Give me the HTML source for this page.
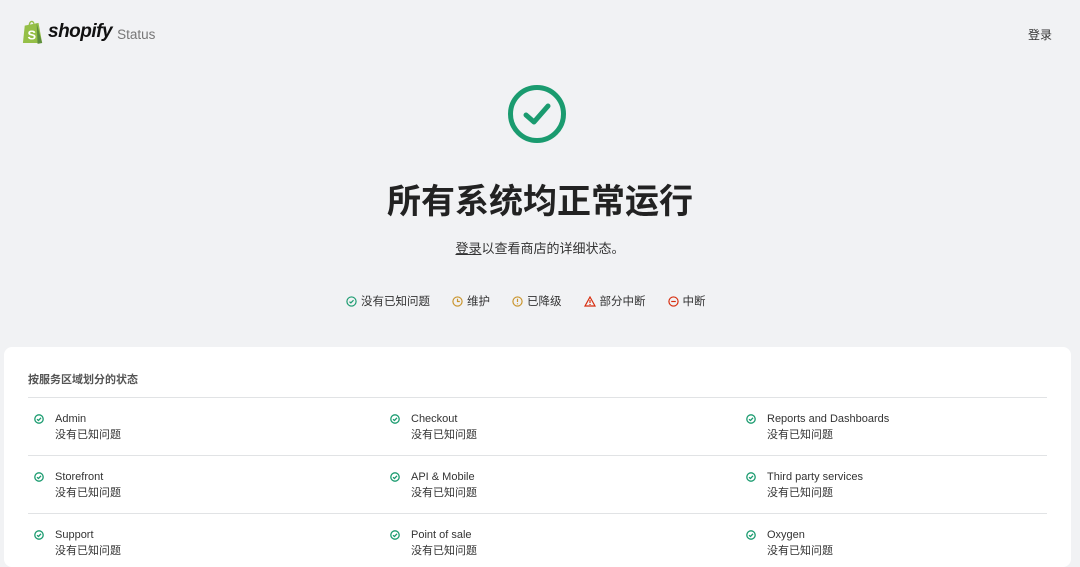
<!DOCTYPE html>
<html><head><meta charset="utf-8"><style>
*{margin:0;padding:0;box-sizing:border-box}
body{width:1080px;height:550px;overflow:hidden;background:#f1f2f4;font-family:"Liberation Sans","Noto Sans CJK SC",sans-serif;color:#202223;position:relative}
.abs{position:absolute}
.logo{left:22px;top:19px;display:flex;align-items:center}
.logo b{font-style:italic;font-size:19px;font-weight:700;letter-spacing:-0.5px;margin-left:4px;color:#111}
.logo span{font-size:13.5px;color:#777;margin-left:5px;margin-top:5px}
.login{right:28px;top:26px;font-size:12px;color:#333}
h1{position:absolute;top:174px;width:100%;text-align:center;font-size:34px;font-weight:700;color:#222}
.sub{top:238px;width:100%;text-align:center;font-size:13px;color:#333}
.sub u{text-decoration:underline}
.legend{top:293px;left:346px;display:flex;font-size:11.5px;color:#333;align-items:center}
.legend div{display:flex;align-items:center;margin-right:22px}
.legend svg{margin-right:4px}
.card{left:4px;top:347px;width:1067px;height:220px;background:#fff;border-radius:8px}
.card h3{position:absolute;left:24px;top:24px;font-size:11px;color:#555;font-weight:700}
.line{position:absolute;left:24px;width:1019px;height:1px;background:#e1e3e5}
.item{position:absolute;font-size:11px;color:#333;line-height:16px}
.item svg{position:absolute;left:-21px;top:3px}
</style></head><body>
<div class="abs logo"><svg width="22" height="26" viewBox="0 0 24 28"><path d="M3 7 L18 4 L22 26 L1 26 Z" fill="#95bf47"/><path d="M16 4.5 L22 26 L17 27 Z" fill="#5e8e3e"/><path d="M8 7 C8 2 12 1 13 5" stroke="#95bf47" stroke-width="1.5" fill="none"/><text x="6" y="22" fill="#fff" font-size="14" font-weight="700" font-family="Liberation Sans">S</text></svg><b>shopify</b><span>Status</span></div>
<div class="abs login">登录</div>
<svg class="abs" style="left:507px;top:84px" width="60" height="60" viewBox="0 0 60 60"><circle cx="30" cy="30" r="26.5" fill="none" stroke="#1a9b6f" stroke-width="5"/><path d="M19 31 L27 38 L41 22" fill="none" stroke="#1a9b6f" stroke-width="5" stroke-linecap="round" stroke-linejoin="round"/></svg>
<h1>所有系统均正常运行</h1>
<div class="abs sub"><u>登录</u>以查看商店的详细状态。</div>
<div class="abs legend">
<div><svg width="11" height="11" viewBox="0 0 12 12"><circle cx="6" cy="6" r="5" fill="none" stroke="#1a9b6f" stroke-width="1.3"/><path d="M3.8 6.2 L5.3 7.5 L8.2 4.6" fill="none" stroke="#1a9b6f" stroke-width="1.3"/></svg>没有已知问题</div>
<div><svg width="11" height="11" viewBox="0 0 12 12"><circle cx="6" cy="6" r="5" fill="none" stroke="#c9942b" stroke-width="1.3"/><path d="M6 3 V6 H8.5" fill="none" stroke="#c9942b" stroke-width="1.3"/></svg>维护</div>
<div><svg width="11" height="11" viewBox="0 0 12 12"><circle cx="6" cy="6" r="5" fill="none" stroke="#c9942b" stroke-width="1.3"/><path d="M6 3 V6.5 M6 8 V9" fill="none" stroke="#c9942b" stroke-width="1.3"/></svg>已降级</div>
<div><svg width="12" height="11" viewBox="0 0 12 11"><path d="M6 1 L11 10 H1 Z" fill="none" stroke="#d72c0d" stroke-width="1.2"/><path d="M6 4 V7 M6 8 V9" stroke="#d72c0d" stroke-width="1.2"/></svg>部分中断</div>
<div><svg width="11" height="11" viewBox="0 0 12 12"><circle cx="6" cy="6" r="5" fill="none" stroke="#d72c0d" stroke-width="1.3"/><path d="M3.5 6 H8.5" stroke="#d72c0d" stroke-width="1.3"/></svg>中断</div>
</div>
<div class="abs card">
<h3>按服务区域划分的状态</h3>
<div class="line" style="top:50px"></div>
<div class="line" style="top:108px"></div>
<div class="line" style="top:166px"></div>
</div>
<svg width="0" height="0" style="position:absolute"><defs><g id="ck"><circle cx="5" cy="5" r="4.2" fill="none" stroke="#1a9b6f" stroke-width="1.3"/><path d="M3 5.2 L4.5 6.5 L7 3.8" fill="none" stroke="#1a9b6f" stroke-width="1.3"/></g></defs></svg>
<div class="item" style="left:55px;top:411px"><svg width="10" height="10"><use href="#ck"/></svg>Admin<br>没有已知问题</div>
<div class="item" style="left:411px;top:411px"><svg width="10" height="10"><use href="#ck"/></svg>Checkout<br>没有已知问题</div>
<div class="item" style="left:767px;top:411px"><svg width="10" height="10"><use href="#ck"/></svg>Reports and Dashboards<br>没有已知问题</div>
<div class="item" style="left:55px;top:469px"><svg width="10" height="10"><use href="#ck"/></svg>Storefront<br>没有已知问题</div>
<div class="item" style="left:411px;top:469px"><svg width="10" height="10"><use href="#ck"/></svg>API &amp; Mobile<br>没有已知问题</div>
<div class="item" style="left:767px;top:469px"><svg width="10" height="10"><use href="#ck"/></svg>Third party services<br>没有已知问题</div>
<div class="item" style="left:55px;top:527px"><svg width="10" height="10"><use href="#ck"/></svg>Support<br>没有已知问题</div>
<div class="item" style="left:411px;top:527px"><svg width="10" height="10"><use href="#ck"/></svg>Point of sale<br>没有已知问题</div>
<div class="item" style="left:767px;top:527px"><svg width="10" height="10"><use href="#ck"/></svg>Oxygen<br>没有已知问题</div>
</body></html>
